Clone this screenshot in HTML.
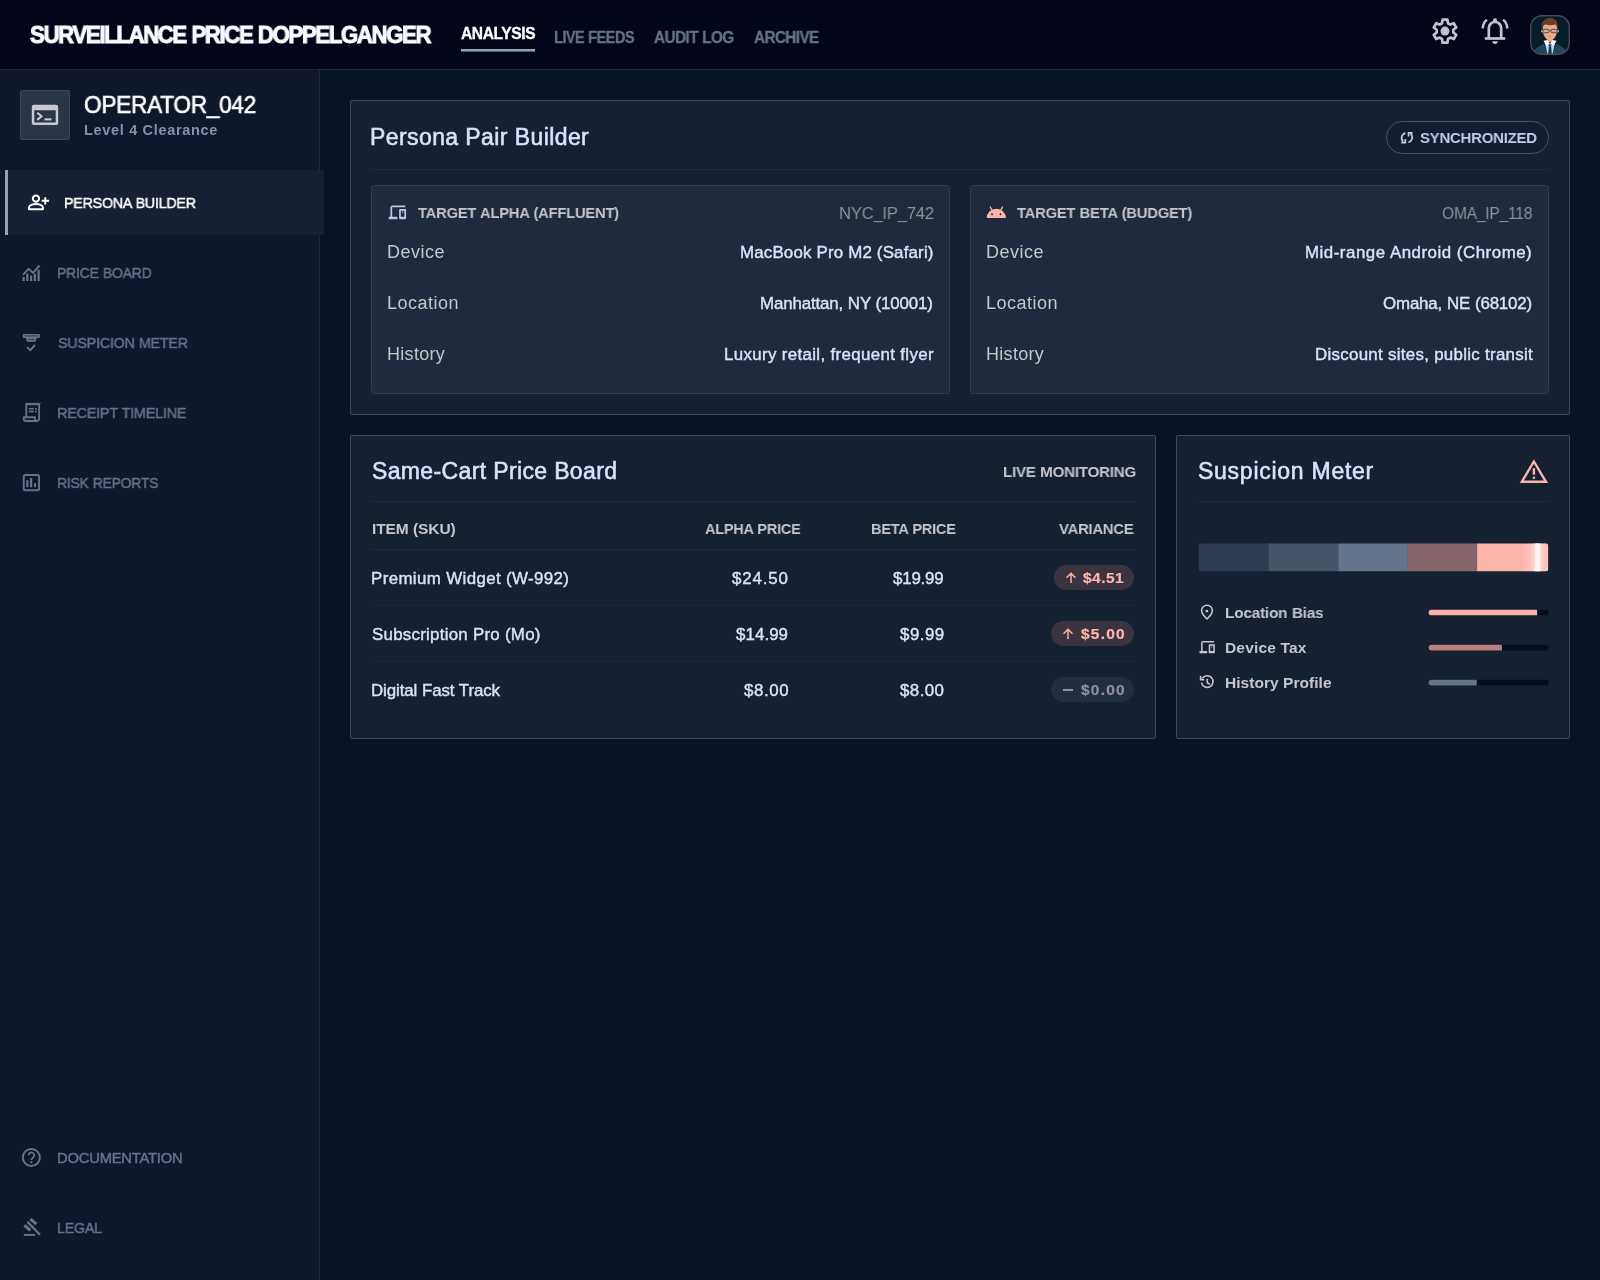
<!DOCTYPE html>
<html lang="en"><head><meta charset="utf-8"><title>Surveillance Price Doppelganger</title>
<style>
html,body{margin:0;padding:0;}
body{width:1600px;height:1280px;overflow:hidden;background:#081425;position:relative;font-family:"Liberation Sans", sans-serif;}
header,aside,main,section{position:absolute;left:0;top:0;width:0;height:0;display:block;}
header>*,aside>*,section>*{position:absolute;box-sizing:border-box;}
span{white-space:nowrap;display:block;transform-origin:0 0;will-change:transform;}
i{display:block;}
</style></head><body>
<header>
<div style="left:0px;top:0px;width:1600px;height:70px;background:#030618;border-bottom:1px solid #1e293b;"></div>
<div style="left:461px;top:49px;width:74px;height:3px;background:linear-gradient(#94a3b8 0,#94a3b8 66.7%,rgba(148,163,184,.55) 66.7%);"></div>
<svg style="left:1428px;top:14px;" width="34" height="34" viewBox="1428 14 34 34"><path d="M1442.04 23.24 L1442.54 19.56 L1447.46 19.56 L1447.96 23.24 L1450.33 24.61 L1453.76 23.20 L1456.22 27.46 L1453.29 29.73 L1453.29 32.47 L1456.22 34.74 L1453.76 39.00 L1450.33 37.59 L1447.96 38.96 L1447.46 42.64 L1442.54 42.64 L1442.04 38.96 L1439.67 37.59 L1436.24 39.00 L1433.78 34.74 L1436.71 32.47 L1436.71 29.73 L1433.78 27.46 L1436.24 23.20 L1439.67 24.61Z" fill="none" stroke="#c0c4d0" stroke-width="2.700" stroke-linejoin="round"/><circle cx="1445" cy="31.100" r="4.500" fill="#c0c4d0"/></svg>
<svg style="left:1478px;top:14px;" width="34" height="34" viewBox="1478 14 34 34"><g fill="none" stroke="#c0c4d0" stroke-width="2.700"><path d="M1488.800 38.500V28.200a6.200 6.200 0 0 1 12.400 0V38.500"/><path d="M1484.800 38.500h20.400"/><path d="M1486.900 19.600A11.500 11.500 0 0 0 1482.800 28.600" stroke-width="2.500"/><path d="M1503.100 19.600A11.500 11.500 0 0 1 1507.200 28.600" stroke-width="2.500"/></g><circle cx="1495" cy="20.300" r="2" fill="#c0c4d0"/><path d="M1492.300 41.300h5.400a2.700 2.700 0 0 1-5.400 0z" fill="#c0c4d0"/></svg>
<svg style="left:1530px;top:15px;" width="40" height="40" viewBox="0 0 40 40"><defs><clipPath id="av"><rect x="0.600" y="0.600" width="38.800" height="38.800" rx="11.400"/></clipPath></defs><g clip-path="url(#av)"><rect width="40" height="40" fill="#071d2a"/><path d="M2.300 40C3 34.200 8 31.600 14 28.700L20 27l6 1.700C32 31.600 37 34.200 37.700 40z" fill="#23465f"/><path d="M15.300 28l4.700 1 4.700-1L22.900 40h-5.800z" fill="#a9dce6"/><path d="M14.300 28.800L17.100 40M25.700 28.800L22.900 40" stroke="#0e3048" stroke-width="0.900" fill="none"/><rect x="17.200" y="22.500" width="5.600" height="4.500" fill="#e09a76"/><path d="M13.500 25.800l4.300-.9L20 29.400l-3.600 1.700z" fill="#fdfdfd"/><path d="M26.500 25.800l-4.300-.9L20 29.400l3.600 1.700z" fill="#fdfdfd"/><path d="M18.400 29.200h3.200l-.6 2.300h-2z" fill="#0f3250"/><path d="M18.900 31.400h2.200l.8 8.600h-3.800z" fill="#0f3250"/><circle cx="12.300" cy="16.300" r="1.200" fill="#eaa47c"/><circle cx="27.700" cy="16.300" r="1.200" fill="#eaa47c"/><path d="M12.700 14.500C12.700 9 16 7.600 20 7.600S27.300 9 27.300 14.500C27.300 19.500 24.600 25.300 20 25.300S12.700 19.500 12.700 14.500z" fill="#f0aa82"/><path d="M11.700 13.800C10.800 6.600 15 3 20.300 3.100c5.200.1 8.300 3.900 7.300 10.700-.4-2.200-1.300-3.800-2.600-4.600-2.500 1.400-6.500 1.300-9.200.4-2 .6-3.400 2.100-4.100 4.200z" fill="#6e3e2d"/><rect x="18.400" y="20.900" width="3.200" height="0.800" rx="0.400" fill="#d98478"/><g stroke="#44525e" stroke-width="1" fill="rgba(150,185,195,0.350)"><rect x="13" y="14.300" width="6" height="3.400" rx="1"/><rect x="21" y="14.300" width="6" height="3.400" rx="1"/></g><path d="M19 15.500h2M13 15l-1.500-.4M27 15l1.500-.4" stroke="#44525e" stroke-width="0.900" fill="none"/></g><rect x="0.700" y="0.700" width="38.600" height="38.600" rx="11.300" fill="none" stroke="#4a4852" stroke-width="1.400"/></svg>
<span style="left:30.15px;top:23px;font-size:24.2px;line-height:24.2px;font-weight:700;color:#f8fafc;letter-spacing:-1.500px;word-spacing:0.750px;transform:scaleX(0.9185);-webkit-text-stroke:1px #f8fafc;">SURVEILLANCE PRICE DOPPELGANGER</span>
<span style="left:460.77px;top:26px;font-size:15.6px;line-height:15.6px;font-weight:700;color:#ffffff;letter-spacing:-0.396px;word-spacing:0.396px;-webkit-text-stroke:0.3px #fff;">ANALYSIS</span>
<span style="left:553.88px;top:30px;font-size:16px;line-height:16px;font-weight:700;color:#64748b;letter-spacing:-0.600px;word-spacing:0.600px;transform:scaleX(0.9093);-webkit-text-stroke:0.3px #64748b;">LIVE FEEDS</span>
<span style="left:654.49px;top:30px;font-size:16px;line-height:16px;font-weight:700;color:#64748b;letter-spacing:-0.600px;word-spacing:0.600px;transform:scaleX(0.9579);-webkit-text-stroke:0.3px #64748b;">AUDIT LOG</span>
<span style="left:753.79px;top:30px;font-size:16px;line-height:16px;font-weight:700;color:#64748b;letter-spacing:-0.600px;word-spacing:0.600px;transform:scaleX(0.9522);-webkit-text-stroke:0.3px #64748b;">ARCHIVE</span>
</header>
<aside>
<div style="left:0px;top:70px;width:320px;height:1210px;background:#0f172a;border-right:1px solid #1e293b;"></div>
<div style="left:20px;top:90px;width:50px;height:50px;background:#2a3548;border:1px solid #3f4653;border-radius:2px;"></div>
<div style="left:5px;top:170px;width:319px;height:65px;background:#162032;border-left:3px solid #94a3b8;"></div>
<svg style="left:29px;top:99px;" width="32" height="32" viewBox="29 99 32 32"><path d="M34 104.700h22a2.200 2.200 0 0 1 2.200 2.200v16a2.200 2.200 0 0 1-2.200 2.200H34a2.200 2.200 0 0 1-2.200-2.200v-16a2.200 2.200 0 0 1 2.200-2.200zM34.300 110.200v12.400h21.400v-12.400z" fill="#c9cad1" fill-rule="evenodd"/><path d="M37.300 112.700l4.200 3.600-4.200 3.600" fill="none" stroke="#c9cad1" stroke-width="2.100"/><rect x="44.500" y="118.300" width="7" height="2.100" fill="#c9cad1"/></svg>
<svg style="left:26px;top:190px;" width="26" height="24" viewBox="26 190 26 24"><g fill="none" stroke="#fff" stroke-width="2"><circle cx="35.950" cy="198.600" r="3.150"/><path d="M29 209.200v-1.600c0-2.400 4-3.600 6.950-3.600s6.950 1.200 6.950 3.600v1.600z" stroke-linejoin="round"/><path d="M45.250 197.200v7.200M41.600 200.700h7.500"/></g></svg>
<svg style="left:20px;top:262px;" width="24" height="22" viewBox="20 262 24 22"><g fill="#64748b"><rect x="22.50" y="277" width="2.200" height="4.00"/><rect x="26.25" y="273.75" width="2.200" height="7.25"/><rect x="30.00" y="275.6" width="2.200" height="5.40"/><rect x="33.75" y="273.75" width="2.200" height="7.25"/><rect x="37.50" y="269.75" width="2.200" height="11.25"/></g><path d="M22.900 274.800l5.850-6 4.300 4.100 6.500-7.400" fill="none" stroke="#64748b" stroke-width="1.900"/></svg>
<svg style="left:20px;top:331px;" width="24" height="22" viewBox="20 331 24 22"><rect x="22.850" y="333.950" width="17.100" height="4.050" rx="0.900" fill="#64748b"/><path d="M25.600 337.800h11.300l-1.500 3.900h-8.300z" fill="#64748b"/><rect x="24.700" y="335.550" width="13.400" height="0.750" fill="#0f172a" opacity="0.800"/><rect x="28.200" y="339.250" width="6.100" height="0.750" fill="#0f172a" opacity="0.800"/><path d="M27.100 347.100l3.200 3.100 4.700-5.200" fill="none" stroke="#64748b" stroke-width="1.900"/></svg>
<svg style="left:20px;top:401px;" width="24" height="24" viewBox="20 401 24 24"><g fill="none" stroke="#64748b" stroke-width="1.850" stroke-linejoin="round"><path d="M26.250 417.200V404.200h12.850v14.400a2.400 2.400 0 0 1-2.400 2.400H26a2.300 2.300 0 0 1-2.300-2.300V417.200h11.300v1.800a1.800 1.800 0 0 0 1.800 1.800"/></g><g fill="#64748b"><rect x="28.800" y="407.900" width="5" height="1.700"/><rect x="28.800" y="410.700" width="5" height="1.700"/><rect x="35" y="407.900" width="1.900" height="1.700"/><rect x="35" y="410.700" width="1.900" height="1.700"/></g><path d="M25.300 403.300l1.150-.9 1.850 1 1.850-1 1.850 1 1.850-1 1.850 1 1.850-1 1.850 1 1.150-.9v1.400H25.300z" fill="#64748b"/></svg>
<svg style="left:20px;top:471px;" width="24" height="24" viewBox="20 471 24 24"><rect x="23.750" y="475" width="15.300" height="15.300" rx="1.900" fill="none" stroke="#64748b" stroke-width="1.900"/><g fill="#64748b"><rect x="26.250" y="480.300" width="2.150" height="6.900"/><rect x="30" y="478" width="2.200" height="9.200"/><rect x="34.100" y="483.100" width="1.900" height="4.100"/></g></svg>
<svg style="left:20px;top:1146px;" width="24" height="24" viewBox="20 1146 24 24"><circle cx="31.350" cy="1157.450" r="8.500" fill="none" stroke="#64748b" stroke-width="1.900"/><path d="M28.600 1155.200a2.800 2.800 0 1 1 4.600 2.200c-1 .8-1.800 1.400-1.800 2.700" fill="none" stroke="#64748b" stroke-width="1.800"/><rect x="30.300" y="1161.300" width="2.200" height="2" rx="0.500" fill="#64748b"/></svg>
<svg style="left:20px;top:1216px;" width="24" height="22" viewBox="20 1216 24 22"><g fill="#64748b"><rect x="23.750" y="1233.900" width="11.250" height="2"/><rect x="29.500" y="1220.050" width="7.800" height="3.100" transform="rotate(40.500 33.400 1221.600)"/><rect x="23.400" y="1226.250" width="7.800" height="3.100" transform="rotate(40.500 27.300 1227.800)"/><rect x="24.800" y="1227.150" width="17.900" height="2.300" transform="rotate(45.700 33.750 1228.300)"/></g></svg>
<span style="left:84.24px;top:94px;font-size:23.7px;line-height:23.7px;font-weight:400;color:#ffffff;letter-spacing:-0.250px;word-spacing:0.500px;transform:scaleX(0.9535);-webkit-text-stroke:0.6px #fff;">OPERATOR_042</span>
<span style="left:84.06px;top:123px;font-size:14.5px;line-height:14.5px;font-weight:700;color:#8291ab;letter-spacing:0.678px;word-spacing:0.000px;">Level 4 Clearance</span>
<span style="left:64.28px;top:196px;font-size:14.75px;line-height:14.75px;font-weight:400;color:#ffffff;letter-spacing:-0.250px;word-spacing:0.500px;transform:scaleX(0.9677);-webkit-text-stroke:0.45px #fff;">PERSONA BUILDER</span>
<span style="left:57.10px;top:266px;font-size:14.75px;line-height:14.75px;font-weight:400;color:#64748b;letter-spacing:-0.250px;word-spacing:0.500px;transform:scaleX(0.9515);-webkit-text-stroke:0.45px #64748b;">PRICE BOARD</span>
<span style="left:57.62px;top:336px;font-size:14.75px;line-height:14.75px;font-weight:400;color:#64748b;letter-spacing:-0.250px;word-spacing:0.500px;transform:scaleX(0.9718);-webkit-text-stroke:0.45px #64748b;">SUSPICION METER</span>
<span style="left:57.06px;top:406px;font-size:14.75px;line-height:14.75px;font-weight:400;color:#64748b;letter-spacing:-0.250px;word-spacing:0.500px;transform:scaleX(0.9788);-webkit-text-stroke:0.45px #64748b;">RECEIPT TIMELINE</span>
<span style="left:57.10px;top:476px;font-size:14.75px;line-height:14.75px;font-weight:400;color:#64748b;letter-spacing:-0.250px;word-spacing:0.500px;transform:scaleX(0.9458);-webkit-text-stroke:0.45px #64748b;">RISK REPORTS</span>
<span style="left:57.04px;top:1151px;font-size:14.75px;line-height:14.75px;font-weight:400;color:#64748b;letter-spacing:-0.201px;word-spacing:0.401px;-webkit-text-stroke:0.45px #64748b;">DOCUMENTATION</span>
<span style="left:57.07px;top:1221px;font-size:14.75px;line-height:14.75px;font-weight:400;color:#64748b;letter-spacing:-0.250px;word-spacing:0.500px;transform:scaleX(0.9696);-webkit-text-stroke:0.45px #64748b;">LEGAL</span>
</aside>
<main>
<section>
<div style="left:350px;top:100px;width:1220px;height:315px;background:#152031;border:1px solid #47484f;border-radius:2px;"></div>
<div style="left:371px;top:169px;width:1178px;height:1px;background:#232c3e;"></div>
<div style="left:371px;top:185px;width:579px;height:209px;background:#1f2a3c;border:1px solid #323a4b;border-radius:3px;"></div>
<div style="left:970px;top:185px;width:579px;height:209px;background:#1f2a3c;border:1px solid #323a4b;border-radius:3px;"></div>
<div style="left:1386px;top:121px;width:163px;height:33px;border:1px solid #47526b;border-radius:17px;background:#131d2f;"></div>
<svg style="left:387.15px;top:202.20px;" width="20.8" height="20.8" viewBox="0 0 24 24"><path d="M2 20v-3h2V6q0-.825.588-1.412T6 4h15v2H6v11h6v3H2Zm13 0q-.425 0-.713-.288T14 19V9q0-.425.287-.713T15 8h6q.425 0 .713.287T22 9v10q0 .425-.287.713T21 20h-6Zm1-3h4v-7h-4v7Z" fill="#b9c7e4"/><circle cx="18" cy="11.600" r="0.800" fill="#b9c7e4"/></svg>
<svg style="left:985px;top:205px;" width="23" height="15" viewBox="985 205 23 15"><path d="M986.700 218.100A9.600 9.300 0 0 1 1005.900 218.100z" fill="#ffb4ab"/><path d="M990.300 207.100l2.200 4M1002.500 207.100l-2.200 4" stroke="#ffb4ab" stroke-width="1.300" stroke-linecap="round" fill="none"/><circle cx="992" cy="214.200" r="0.950" fill="#1b2233"/><circle cx="1000.500" cy="214.200" r="0.950" fill="#1b2233"/></svg>
<svg style="left:1399px;top:130px;" width="16" height="16" viewBox="1399 130 16 16"><g fill="none" stroke="#c3cbe4" stroke-width="1.700"><path d="M1405.400 133.100A5 5 0 0 0 1403.300 141.700"/><path d="M1408.400 142.300A5 5 0 0 0 1410.500 133.700"/><path d="M1401.200 142.600h4.150v-3.600"/><path d="M1412.700 132.800h-4.150v3.600"/></g></svg>
<span style="left:370.48px;top:126px;font-size:23.0px;line-height:23.0px;font-weight:400;color:#d8e3fb;letter-spacing:0.411px;word-spacing:0.000px;-webkit-text-stroke:0.55px #d8e3fb;">Persona Pair Builder</span>
<span style="left:1420.28px;top:130px;font-size:15.5px;line-height:15.5px;font-weight:700;color:#c3cbe4;letter-spacing:-0.250px;word-spacing:0.500px;transform:scaleX(0.9651);">SYNCHRONIZED</span>
<span style="left:418.28px;top:205px;font-size:15.5px;line-height:15.5px;font-weight:700;color:#c6c6cd;letter-spacing:-0.250px;word-spacing:0.500px;transform:scaleX(0.9530);">TARGET ALPHA (AFFLUENT)</span>
<span style="left:839.00px;top:206px;font-size:16.9px;line-height:16.9px;font-weight:400;color:#909097;letter-spacing:-0.250px;word-spacing:0.500px;transform:scaleX(0.9863);">NYC_IP_742</span>
<span style="left:386.59px;top:243px;font-size:18px;line-height:18px;font-weight:400;color:#c6c6cd;letter-spacing:0.523px;word-spacing:0.000px;">Device</span>
<span style="left:386.59px;top:294px;font-size:18px;line-height:18px;font-weight:400;color:#c6c6cd;letter-spacing:0.509px;word-spacing:0.000px;">Location</span>
<span style="left:386.59px;top:345px;font-size:18px;line-height:18px;font-weight:400;color:#c6c6cd;letter-spacing:0.300px;word-spacing:0.000px;">History</span>
<span style="left:740.13px;top:245px;font-size:16.9px;line-height:16.9px;font-weight:400;color:#d8e3fb;letter-spacing:0.174px;word-spacing:0.000px;-webkit-text-stroke:0.4px #d8e3fb;">MacBook Pro M2 (Safari)</span>
<span style="left:760.38px;top:296px;font-size:16.9px;line-height:16.9px;font-weight:400;color:#d8e3fb;letter-spacing:-0.149px;word-spacing:0.298px;-webkit-text-stroke:0.4px #d8e3fb;">Manhattan, NY (10001)</span>
<span style="left:724.18px;top:347px;font-size:16.9px;line-height:16.9px;font-weight:400;color:#d8e3fb;letter-spacing:0.344px;word-spacing:0.000px;-webkit-text-stroke:0.4px #d8e3fb;">Luxury retail, frequent flyer</span>
<span style="left:1016.88px;top:205px;font-size:15.5px;line-height:15.5px;font-weight:700;color:#c6c6cd;letter-spacing:-0.250px;word-spacing:0.500px;transform:scaleX(0.9542);">TARGET BETA (BUDGET)</span>
<span style="left:1442.27px;top:206px;font-size:16.9px;line-height:16.9px;font-weight:400;color:#909097;letter-spacing:-0.250px;word-spacing:0.500px;transform:scaleX(0.9246);">OMA_IP_118</span>
<span style="left:985.59px;top:243px;font-size:18px;line-height:18px;font-weight:400;color:#c6c6cd;letter-spacing:0.523px;word-spacing:0.000px;">Device</span>
<span style="left:985.59px;top:294px;font-size:18px;line-height:18px;font-weight:400;color:#c6c6cd;letter-spacing:0.509px;word-spacing:0.000px;">Location</span>
<span style="left:985.59px;top:345px;font-size:18px;line-height:18px;font-weight:400;color:#c6c6cd;letter-spacing:0.300px;word-spacing:0.000px;">History</span>
<span style="left:1304.88px;top:245px;font-size:16.9px;line-height:16.9px;font-weight:400;color:#d8e3fb;letter-spacing:0.508px;word-spacing:0.000px;-webkit-text-stroke:0.4px #d8e3fb;">Mid-range Android (Chrome)</span>
<span style="left:1383.41px;top:296px;font-size:16.9px;line-height:16.9px;font-weight:400;color:#d8e3fb;letter-spacing:-0.164px;word-spacing:0.328px;-webkit-text-stroke:0.4px #d8e3fb;">Omaha, NE (68102)</span>
<span style="left:1314.88px;top:347px;font-size:16.9px;line-height:16.9px;font-weight:400;color:#d8e3fb;letter-spacing:0.290px;word-spacing:0.000px;-webkit-text-stroke:0.4px #d8e3fb;">Discount sites, public transit</span>
</section>
<section>
<div style="left:350px;top:435px;width:806px;height:304px;background:#152031;border:1px solid #47484f;border-radius:2px;"></div>
<div style="left:371px;top:501px;width:764px;height:1px;background:#232c3e;"></div>
<div style="left:371px;top:549px;width:764px;height:1px;background:#232c3e;"></div>
<div style="left:371px;top:605px;width:764px;height:1px;background:#1d2739;"></div>
<div style="left:371px;top:661px;width:764px;height:1px;background:#1d2739;"></div>
<div style="left:1054px;top:565px;width:80px;height:25px;background:#3a3340;border-radius:13px;"></div>
<div style="left:1051.25px;top:621.25px;width:82.5px;height:25px;background:#3a3340;border-radius:13px;"></div>
<div style="left:1051.25px;top:677.4px;width:82.5px;height:25px;background:#232d40;border-radius:13px;"></div>
<svg style="left:1063.6px;top:570.8px;" width="14" height="14" viewBox="1063.6 570.8 14 14"><path d="M1070.6 582.9V573.5999999999999M1066.1 577.5l4.500-4.500 4.500 4.500" fill="none" stroke="#ffb4ab" stroke-width="1.500"/></svg>
<svg style="left:1060.95px;top:626.95px;" width="14" height="14" viewBox="1060.95 626.95 14 14"><path d="M1067.95 639.0500000000001V629.75M1063.45 633.6500000000001l4.500-4.500 4.500 4.500" fill="none" stroke="#ffb4ab" stroke-width="1.500"/></svg>
<div style="left:1062.8px;top:688.95px;width:10.3px;height:1.7px;background:#8f9099;"></div>
<span style="left:371.56px;top:460px;font-size:23.0px;line-height:23.0px;font-weight:400;color:#d8e3fb;letter-spacing:0.361px;word-spacing:0.000px;-webkit-text-stroke:0.55px #d8e3fb;">Same-Cart Price Board</span>
<span style="left:1003.02px;top:464px;font-size:15.5px;line-height:15.5px;font-weight:700;color:#c6c6cd;letter-spacing:-0.250px;word-spacing:0.500px;transform:scaleX(0.9777);">LIVE MONITORING</span>
<span style="left:371.50px;top:521px;font-size:15.5px;line-height:15.5px;font-weight:700;color:#c6c6cd;letter-spacing:-0.094px;word-spacing:0.187px;">ITEM (SKU)</span>
<span style="left:704.65px;top:521px;font-size:15.5px;line-height:15.5px;font-weight:700;color:#c6c6cd;letter-spacing:-0.250px;word-spacing:0.500px;transform:scaleX(0.9334);">ALPHA PRICE</span>
<span style="left:871.26px;top:521px;font-size:15.5px;line-height:15.5px;font-weight:700;color:#c6c6cd;letter-spacing:-0.250px;word-spacing:0.500px;transform:scaleX(0.9404);">BETA PRICE</span>
<span style="left:1058.94px;top:521px;font-size:15.5px;line-height:15.5px;font-weight:700;color:#c6c6cd;letter-spacing:-0.250px;word-spacing:0.500px;transform:scaleX(0.9561);">VARIANCE</span>
<span style="left:371.38px;top:571px;font-size:16.9px;line-height:16.9px;font-weight:400;color:#d8e3fb;letter-spacing:0.368px;word-spacing:0.000px;-webkit-text-stroke:0.4px #d8e3fb;">Premium Widget (W-992)</span>
<span style="left:372.17px;top:627px;font-size:16.9px;line-height:16.9px;font-weight:400;color:#d8e3fb;letter-spacing:0.254px;word-spacing:0.000px;-webkit-text-stroke:0.4px #d8e3fb;">Subscription Pro (Mo)</span>
<span style="left:371.38px;top:683px;font-size:16.9px;line-height:16.9px;font-weight:400;color:#d8e3fb;letter-spacing:-0.111px;word-spacing:0.221px;-webkit-text-stroke:0.4px #d8e3fb;">Digital Fast Track</span>
<span style="left:732.40px;top:571px;font-size:16.9px;line-height:16.9px;font-weight:400;color:#d8e3fb;letter-spacing:0.846px;word-spacing:0.000px;-webkit-text-stroke:0.4px #d8e3fb;">$24.50</span>
<span style="left:736.45px;top:627px;font-size:16.9px;line-height:16.9px;font-weight:400;color:#d8e3fb;letter-spacing:0.069px;word-spacing:0.000px;-webkit-text-stroke:0.4px #d8e3fb;">$14.99</span>
<span style="left:743.60px;top:683px;font-size:16.9px;line-height:16.9px;font-weight:400;color:#d8e3fb;letter-spacing:0.582px;word-spacing:0.000px;-webkit-text-stroke:0.4px #d8e3fb;">$8.00</span>
<span style="left:893.20px;top:571px;font-size:16.9px;line-height:16.9px;font-weight:400;color:#d8e3fb;letter-spacing:-0.201px;word-spacing:0.402px;-webkit-text-stroke:0.4px #d8e3fb;">$19.99</span>
<span style="left:899.60px;top:627px;font-size:16.9px;line-height:16.9px;font-weight:400;color:#d8e3fb;letter-spacing:0.498px;word-spacing:0.000px;-webkit-text-stroke:0.4px #d8e3fb;">$9.99</span>
<span style="left:899.60px;top:683px;font-size:16.9px;line-height:16.9px;font-weight:400;color:#d8e3fb;letter-spacing:0.432px;word-spacing:0.000px;-webkit-text-stroke:0.4px #d8e3fb;">$8.00</span>
<span style="left:1083.41px;top:570px;font-size:15.5px;line-height:15.5px;font-weight:700;color:#ffb4ab;letter-spacing:0.468px;word-spacing:0.000px;-webkit-text-stroke:0.2px #ffb4ab;">$4.51</span>
<span style="left:1080.91px;top:626px;font-size:15.5px;line-height:15.5px;font-weight:700;color:#ffb4ab;letter-spacing:1.205px;word-spacing:0.000px;-webkit-text-stroke:0.2px #ffb4ab;">$5.00</span>
<span style="left:1080.91px;top:682px;font-size:15.5px;line-height:15.5px;font-weight:700;color:#8f9099;letter-spacing:1.205px;word-spacing:0.000px;-webkit-text-stroke:0.2px #8f9099;">$0.00</span>
</section>
<section>
<div style="left:1176px;top:435px;width:394px;height:304px;background:#152031;border:1px solid #47484f;border-radius:2px;"></div>
<div style="left:1197px;top:501px;width:352px;height:1px;background:#232c3e;"></div>
<svg style="left:1196px;top:540px;" width="356" height="36" viewBox="1196 540 356 36"><defs><clipPath id="mt"><rect x="1198.700" y="543.550" width="349.500" height="27.750" rx="2"/></clipPath><linearGradient id="mg" x1="0" x2="1" y1="0" y2="0"><stop offset="0" stop-color="#fff" stop-opacity="0"/><stop offset="0.600" stop-color="#fff" stop-opacity="0"/><stop offset="0.800" stop-color="#fff" stop-opacity="0.300"/><stop offset="1" stop-color="#fff" stop-opacity="0.220"/></linearGradient><filter id="mb" x="-3" y="-1" width="7" height="3"><feGaussianBlur stdDeviation="2"/></filter></defs><g clip-path="url(#mt)"><rect x="1198.7" y="540" width="70.3" height="36" fill="#2f3b50"/><rect x="1268.7" y="540" width="70.3" height="36" fill="#475569"/><rect x="1338.7" y="540" width="69.2" height="36" fill="#64748b"/><rect x="1407.6" y="540" width="69.8" height="36" fill="#85646a"/><rect x="1477.1" y="540" width="71.4" height="36" fill="#fdb4a9"/><rect x="1477.700" y="540" width="71" height="36" fill="url(#mg)"/><rect x="1534.300" y="540" width="6.600" height="36" fill="#fff" opacity="0.550" filter="url(#mb)"/><rect x="1535.200" y="540" width="5" height="36" fill="#fcf5f6"/></g></svg>
<svg style="left:1426px;top:607px;" width="126" height="12" viewBox="1426 607 126 12"><defs><clipPath id="mb609"><rect x="1428.600" y="609.65" width="120.200" height="5.700" rx="2.850"/></clipPath></defs><g clip-path="url(#mb609)"><rect x="1428" y="608.65" width="122" height="8" fill="#040e1f"/><rect x="1428" y="608.65" width="109.1" height="8" fill="#ffb4ab"/></g></svg>
<svg style="left:1426px;top:642px;" width="126" height="12" viewBox="1426 642 126 12"><defs><clipPath id="mb644"><rect x="1428.600" y="644.7" width="120.200" height="5.700" rx="2.850"/></clipPath></defs><g clip-path="url(#mb644)"><rect x="1428" y="643.7" width="122" height="8" fill="#040e1f"/><rect x="1428" y="643.7" width="73.89999999999999" height="8" fill="#b87f7e"/></g></svg>
<svg style="left:1426px;top:677px;" width="126" height="12" viewBox="1426 677 126 12"><defs><clipPath id="mb679"><rect x="1428.600" y="679.7" width="120.200" height="5.700" rx="2.850"/></clipPath></defs><g clip-path="url(#mb679)"><rect x="1428" y="678.7" width="122" height="8" fill="#040e1f"/><rect x="1428" y="678.7" width="48.800000000000004" height="8" fill="#64748b"/></g></svg>
<svg style="left:1516px;top:454px;" width="36" height="32" viewBox="1516 454 36 32"><path d="M1533.900 461.500L1546 481.800H1521.800z" fill="none" stroke="#ffb4ab" stroke-width="2.400" stroke-linejoin="miter"/><rect x="1532.700" y="468.200" width="2.400" height="6.500" fill="#ffb4ab"/><rect x="1532.700" y="476.400" width="2.400" height="2.500" rx="1" fill="#ffb4ab"/></svg>
<svg style="left:1198px;top:603px;" width="18" height="19" viewBox="1198 603 18 19"><path d="M1207 619c-3.600-3.300-5.400-6-5.400-8.400a5.400 5.400 0 0 1 10.800 0c0 2.400-1.800 5.100-5.400 8.400z" fill="none" stroke="#c6c6cd" stroke-width="1.600" stroke-linejoin="round"/><circle cx="1206.900" cy="611.100" r="1.400" fill="#c6c6cd"/></svg>
<svg style="left:1197.70px;top:638.40px;" width="18.4" height="18.4" viewBox="0 0 24 24"><path d="M2 20v-3h2V6q0-.825.588-1.412T6 4h15v2H6v11h6v3H2Zm13 0q-.425 0-.713-.288T14 19V9q0-.425.287-.713T15 8h6q.425 0 .713.287T22 9v10q0 .425-.287.713T21 20h-6Zm1-3h4v-7h-4v7Z" fill="#c6c6cd"/><circle cx="18" cy="11.600" r="0.800" fill="#c6c6cd"/></svg>
<svg style="left:1198px;top:674px;" width="18" height="17" viewBox="1198 674 18 17"><g fill="none" stroke="#c6c6cd" stroke-width="1.600"><path d="M1202.200 678.600A5.800 5.800 0 1 1 1201.500 682.600"/><path d="M1200.600 676v3.700h3.700"/><path d="M1207.300 678.800v3.900l2.700 1.700"/></g></svg>
<span style="left:1198.36px;top:460px;font-size:23.0px;line-height:23.0px;font-weight:400;color:#d8e3fb;letter-spacing:0.741px;word-spacing:0.000px;-webkit-text-stroke:0.55px #d8e3fb;">Suspicion Meter</span>
<span style="left:1224.51px;top:605px;font-size:15.5px;line-height:15.5px;font-weight:700;color:#c6c6cd;letter-spacing:-0.250px;word-spacing:0.500px;transform:scaleX(0.9948);">Location Bias</span>
<span style="left:1224.50px;top:640px;font-size:15.5px;line-height:15.5px;font-weight:700;color:#c6c6cd;letter-spacing:0.162px;word-spacing:0.000px;">Device Tax</span>
<span style="left:1224.50px;top:675px;font-size:15.5px;line-height:15.5px;font-weight:700;color:#c6c6cd;letter-spacing:0.040px;word-spacing:0.000px;">History Profile</span>
</section>
</main>
</body></html>
